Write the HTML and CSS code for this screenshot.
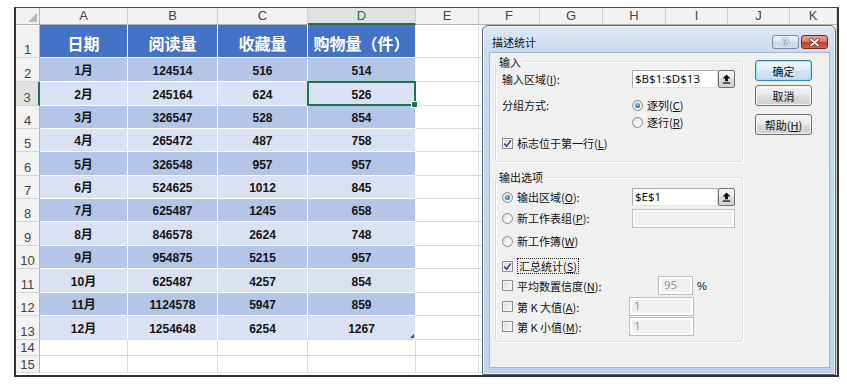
FILE: index.html
```html
<!DOCTYPE html>
<html lang="zh-CN">
<head>
<meta charset="utf-8">
<title>描述统计</title>
<link rel="stylesheet" href="styles.css">
</head>
<body>
<div class="frame">
  <div class="sheet">
    <div class="row colhead">
      <span class="corner"><svg width="9" height="9" viewBox="0 0 9 9"><path d="M9 0V9H0Z" fill="#b9b9b9"/></svg></span>
      <span>A</span><span>B</span><span>C</span><span class="cur">D</span><span>E</span><span>F</span><span>G</span><span>H</span><span>I</span><span>J</span><span>K</span>
    </div>
    <div class="row thead">
      <span>1</span><span>日期</span><span>阅读量</span><span>收藏量</span><span>购物量（件）</span><span></span><span></span><span></span><span></span><span></span><span></span><span></span>
    </div>
    <div class="row dark">
      <span>2</span><span>1月</span><span>124514</span><span>516</span><span>514</span><span></span><span></span><span></span><span></span><span></span><span></span><span></span>
    </div>
    <div class="row light">
      <span class="cur">3</span><span>2月</span><span>245164</span><span>624</span><span class="active">526</span><span></span><span></span><span></span><span></span><span></span><span></span><span></span>
    </div>
    <div class="row dark">
      <span>4</span><span>3月</span><span>326547</span><span>528</span><span>854</span><span></span><span></span><span></span><span></span><span></span><span></span><span></span>
    </div>
    <div class="row light">
      <span>5</span><span>4月</span><span>265472</span><span>487</span><span>758</span><span></span><span></span><span></span><span></span><span></span><span></span><span></span>
    </div>
    <div class="row dark">
      <span>6</span><span>5月</span><span>326548</span><span>957</span><span>957</span><span></span><span></span><span></span><span></span><span></span><span></span><span></span>
    </div>
    <div class="row light">
      <span>7</span><span>6月</span><span>524625</span><span>1012</span><span>845</span><span></span><span></span><span></span><span></span><span></span><span></span><span></span>
    </div>
    <div class="row dark">
      <span>8</span><span>7月</span><span>625487</span><span>1245</span><span>658</span><span></span><span></span><span></span><span></span><span></span><span></span><span></span>
    </div>
    <div class="row light">
      <span>9</span><span>8月</span><span>846578</span><span>2624</span><span>748</span><span></span><span></span><span></span><span></span><span></span><span></span><span></span>
    </div>
    <div class="row dark">
      <span>10</span><span>9月</span><span>954875</span><span>5215</span><span>957</span><span></span><span></span><span></span><span></span><span></span><span></span><span></span>
    </div>
    <div class="row light">
      <span>11</span><span>10月</span><span>625487</span><span>4257</span><span>854</span><span></span><span></span><span></span><span></span><span></span><span></span><span></span>
    </div>
    <div class="row dark">
      <span>12</span><span>11月</span><span>1124578</span><span>5947</span><span>859</span><span></span><span></span><span></span><span></span><span></span><span></span><span></span>
    </div>
    <div class="row light last">
      <span>13</span><span>12月</span><span>1254648</span><span>6254</span><span class="tend">1267</span><span></span><span></span><span></span><span></span><span></span><span></span><span></span>
    </div>
    <div class="row">
      <span>14</span><span></span><span></span><span></span><span></span><span></span><span></span><span></span><span></span><span></span><span></span><span></span>
    </div>
    <div class="row">
      <span>15</span><span></span><span></span><span></span><span></span><span></span><span></span><span></span><span></span><span></span><span></span><span></span>
    </div>
  </div>

  <div class="dialog">
    <div class="titlebar">
      <span class="title">描述统计</span>
      <span class="caps">
        <span class="cap cap-help">?</span>
        <span class="cap cap-close"><svg width="11" height="9" viewBox="0 0 11 9"><path d="M2 1.5L9 7.5M9 1.5L2 7.5" stroke="#6e2418" stroke-width="3.4" stroke-linecap="round"/><path d="M2 1.5L9 7.5M9 1.5L2 7.5" stroke="#fff" stroke-width="2" stroke-linecap="round"/></svg></span>
      </span>
    </div>
    <div class="client">
      <div class="groups">
        <div class="group g-in">
          <span class="legend">输入</span>
          <div class="line l1">
            <span class="lbl w130">输入区域(<u>I</u>):</span>
            <span class="field">$B$1:$D$13</span>
            <span class="pick"><svg width="9" height="10" viewBox="0 0 9 10"><path d="M4.5 0.5L8.5 4.6H6V7.2H3V4.6H0.5Z" fill="#111"/><rect x="0.8" y="8.4" width="7.4" height="1.3" fill="#111"/></svg></span>
          </div>
          <div class="line l2">
            <span class="lbl w130">分组方式:</span>
            <span class="radio on"></span><span>逐列(<u>C</u>)</span>
          </div>
          <div class="line l3">
            <span class="radio"></span><span>逐行(<u>R</u>)</span>
          </div>
          <div class="line l4">
            <span class="check"><svg width="9" height="9" viewBox="0 0 9 9"><path d="M1.3 4.6L3.6 7.2L7.8 1.4" fill="none" stroke="#2d4684" stroke-width="1.6"/></svg></span><span>标志位于第一行(<u>L</u>)</span>
          </div>
        </div>

        <div class="group g-out">
          <span class="legend">输出选项</span>
          <div class="line o1">
            <span class="lbl w130"><span class="radio on"></span>输出区域(<u>O</u>):</span>
            <span class="field">$E$1</span>
            <span class="pick"><svg width="9" height="10" viewBox="0 0 9 10"><path d="M4.5 0.5L8.5 4.6H6V7.2H3V4.6H0.5Z" fill="#111"/><rect x="0.8" y="8.4" width="7.4" height="1.3" fill="#111"/></svg></span>
          </div>
          <div class="line o2">
            <span class="lbl w130"><span class="radio"></span>新工作表组(<u>P</u>):</span>
            <span class="field off wide"></span>
          </div>
          <div class="line o3">
            <span class="radio"></span><span>新工作簿(<u>W</u>)</span>
          </div>
          <div class="line o4">
            <span class="check"><svg width="9" height="9" viewBox="0 0 9 9"><path d="M1.3 4.6L3.6 7.2L7.8 1.4" fill="none" stroke="#2d4684" stroke-width="1.6"/></svg></span><span class="focus">汇总统计(<u>S</u>)</span>
          </div>
          <div class="line o5">
            <span class="lbl w156"><span class="check"></span>平均数置信度(<u>N</u>):</span>
            <span class="field off small">95</span>
            <span class="pct">%</span>
          </div>
          <div class="line o6">
            <span class="lbl w127"><span class="check"></span>第 K 大值(<u>A</u>):</span>
            <span class="field off mid">1</span>
          </div>
          <div class="line o7">
            <span class="lbl w127"><span class="check"></span>第 K 小值(<u>M</u>):</span>
            <span class="field off mid">1</span>
          </div>
        </div>
      </div>

      <div class="buttons">
        <span class="btn default">确定</span>
        <span class="btn">取消</span>
        <span class="btn help">帮助(<u>H</u>)</span>
      </div>
    </div>
  </div>
</div>
</body>
</html>
```

FILE: styles.css
```css
* { box-sizing: border-box; }

html, body {
  margin: 0;
  padding: 0;
  background: #fff;
}

body {
  width: 847px;
  height: 388px;
  overflow: hidden;
  font-family: "Liberation Sans", "Noto Sans CJK SC", sans-serif;
}

/* ---------- worksheet ---------- */
.frame {
  position: relative;
  margin: 7px 0 0 14px;
  width: 825px;
  border-top: 1px solid #4a4a4a;
  border-left: 2px solid #333;
  border-right: 2px solid #333;
  border-bottom: 2px solid #333;
}

.sheet {
  display: grid;
  grid-template-columns: 24px 88px 90px 90px 108px 63px 61px 63px 63px 62px 62px 47px;
  grid-template-rows: 17px 33px 24px 24px 23px 23px 24px 23px 23px 24px 23px 24px 23px 24px 16px 17px;
  height: 367px;
  overflow: hidden;
}

.row { display: contents; }

.row > span {
  display: flex;
  align-items: flex-end;
  justify-content: center;
  border-right: 1px solid #dadada;
  border-bottom: 1px solid #dadada;
  padding-bottom: 3px;
  font-size: 12px;
  line-height: 14px;
  font-weight: bold;
  color: #141414;
  white-space: nowrap;
}

/* row numbers */
.row > span:first-child {
  background: #f2f2f2;
  border-right-color: #b3b3b3;
  border-bottom-color: #d4d4d4;
  padding-bottom: 0;
  font-size: 13px;
  line-height: 15px;
  font-weight: normal;
  color: #454545;
}

.row > span:first-child.cur {
  background: #e1e1e1;
  color: #217346;
  border-right: 2px solid #217346;
}

/* column letters */
.colhead > span {
  background: #f2f2f2;
  border-right-color: #d0d0d0;
  border-bottom-color: #b3b3b3;
  align-items: center;
  padding: 0;
  font-size: 13px;
  font-weight: normal;
  color: #454545;
}

.colhead > span.cur {
  background: #e1e1e1;
  color: #217346;
  border-bottom: 2px solid #217346;
}

.row > span.corner {
  justify-content: flex-end;
  align-items: flex-end;
  padding: 0 2px 2px 0;
  border-right-color: #b3b3b3;
  border-bottom-color: #b3b3b3;
}

/* table body */
.thead > span:nth-child(n+2):nth-child(-n+5) {
  background: #4472c4;
  color: #fff;
  border-color: #fff;
  align-items: center;
  padding: 3px 0 0;
  font-family: "Noto Sans CJK SC", sans-serif;
  font-size: 16px;
  line-height: 20px;
}

.dark > span:nth-child(n+2):nth-child(-n+5) {
  background: #b4c6e7;
  border-color: #fff;
}

.light > span:nth-child(n+2):nth-child(-n+5) {
  background: #d9e1f2;
  border-color: #fff;
}

.last > span:nth-child(n+2):nth-child(-n+5) {
  border-bottom-color: #dadada;
}

/* active cell */
.row > span.active { position: relative; }

.row > span.active::after {
  content: "";
  position: absolute;
  left: -1px;
  top: -1px;
  right: -1px;
  bottom: -1px;
  border: 2px solid #217346;
}

.row > span.active::before {
  content: "";
  position: absolute;
  right: -3px;
  bottom: -3px;
  width: 5px;
  height: 5px;
  background: #217346;
  border: 1px solid #fff;
  z-index: 1;
}

.row > span.tend { position: relative; }

.row > span.tend::after {
  content: "";
  position: absolute;
  right: 1px;
  bottom: 1px;
  width: 4px;
  height: 4px;
  background: #2e4f9c;
  clip-path: polygon(100% 0, 100% 100%, 0 100%);
}

/* ---------- dialog ---------- */
.dialog {
  position: absolute;
  left: 466px;
  top: 17px;
  width: 354px;
  height: 350px;
  border: 1px solid #58677a;
  border-radius: 6px 6px 0 0;
  background: linear-gradient(#dfe9f5, #cadbef 26px, #c0d3ea);
  box-shadow: inset 0 0 0 1px rgba(255, 255, 255, 0.6);
  padding: 0 5px 6px 6px;
  display: flex;
  flex-direction: column;
  font-family: "Noto Sans CJK SC", "Liberation Sans", sans-serif;
  font-size: 11px;
  color: #111;
}

.titlebar {
  height: 26px;
  flex: none;
  display: flex;
  justify-content: space-between;
  align-items: flex-start;
  padding: 8px 2px 0 3px;
}

.title { line-height: 16px; }

.caps {
  display: flex;
  gap: 2px;
  margin-top: 1px;
}

.cap {
  width: 27px;
  height: 14px;
  border-radius: 3px;
  display: flex;
  align-items: center;
  justify-content: center;
}

.cap-help {
  border: 1px solid #7b8ca3;
  background: linear-gradient(#eef3f9, #d9e4f1 50%, #c7d6e9 51%, #d2dfee);
  color: #fff;
  font-family: "Liberation Sans", sans-serif;
  font-weight: bold;
  font-size: 11px;
  line-height: 12px;
  text-shadow: 0 0 1px #2d3e55, 0 0 1px #2d3e55;
}

.cap-close {
  border: 1px solid #6b2a22;
  background: linear-gradient(#e7a597, #d77b68 45%, #c23d27 52%, #d26a52);
}

.client {
  flex: 1;
  background: #f0f0f0;
  border: 1px solid #a6b8cf;
  display: flex;
  gap: 12px;
  padding-left: 5px;
}

.groups {
  margin-top: 8px;
  width: 248px;
}

.group {
  border: 1px solid #d5dfe5;
  border-radius: 3px;
  box-shadow: inset 1px 1px 0 #fff, 1px 1px 0 #fff;
  padding: 0 0 9px 6px;
  display: flex;
  flex-direction: column;
}

.g-out {
  margin-top: 15px;
  padding-bottom: 5px;
}

.legend {
  align-self: flex-start;
  margin: -8px 0 0 -5px;
  padding: 0 2px;
  background: #f0f0f0;
  line-height: 16px;
}

.g-out .legend { margin-top: -9px; }

.line {
  display: flex;
  align-items: center;
  height: 18px;
  white-space: nowrap;
}

.l2 { margin-top: 8px; }
.l3 { height: 16px; padding-left: 130px; }
.l4 { margin-top: 4px; }

.o1 { margin-top: 3px; }
.o2 { margin-top: 3px; }
.o3 { margin-top: 5px; }
.o4 { margin-top: 7px; }
.o5 { margin-top: 1px; height: 19px; }
.o6 { margin-top: 2px; height: 19px; }
.o7 { margin-top: 1px; height: 19px; }

.lbl {
  flex: none;
  display: flex;
  align-items: center;
}

.w130 { width: 130px; }
.w156 { width: 156px; }
.w127 { width: 127px; }

u { text-underline-offset: 1px; }

.field {
  width: 86px;
  height: 18px;
  flex: none;
  background: #fff;
  border: 1px solid #abadb3;
  border-right-color: #d5d9e0;
  border-bottom-color: #dfe4ea;
  padding-left: 2px;
  font-family: "Noto Sans", "Liberation Sans", sans-serif;
  font-size: 11.5px;
  line-height: 16px;
  color: #111;
}

.field.off {
  background: #f0f0f0;
  border: 1px solid #bdbdbd;
  box-shadow: inset 0 0 0 2px #fff;
  color: #9a9a9a;
  padding-left: 4px;
}

.field.wide { width: 103px; height: 19px; }
.field.small { width: 35px; height: 19px; padding-left: 5px; }
.field.mid { width: 65px; height: 19px; }

.pct {
  margin-left: 4px;
  font-family: "Liberation Sans", sans-serif;
  font-size: 11px;
}

.pick {
  width: 17px;
  height: 18px;
  flex: none;
  border: 1px solid #707070;
  border-radius: 2px;
  background: linear-gradient(#f6f6f6, #e9e9e9 50%, #dcdcdc 51%, #d2d2d2);
  display: flex;
  align-items: center;
  justify-content: center;
}

.radio {
  width: 11px;
  height: 11px;
  flex: none;
  margin-right: 4px;
  border: 1px solid #8e8f8f;
  border-radius: 50%;
  background: radial-gradient(circle at 60% 65%, #ffffff, #e6e6e6 60%, #d3d3d3);
  display: flex;
  align-items: center;
  justify-content: center;
}

.radio.on::before {
  content: "";
  width: 5px;
  height: 5px;
  border-radius: 50%;
  background: radial-gradient(circle at 40% 35%, #8cc8f2, #1f6fb8 70%, #0d4f95);
}

.check {
  width: 11px;
  height: 11px;
  flex: none;
  margin-right: 4px;
  border: 1px solid #8e8f8f;
  background: linear-gradient(135deg, #dcdcdc, #f8f8f8);
  box-shadow: inset 0 0 0 1px #f4f4f4;
  display: flex;
  align-items: center;
  justify-content: center;
}

.focus {
  border: 1px dotted #222;
  padding: 0 1px;
  line-height: 14px;
}

.buttons {
  margin-top: 7px;
  display: flex;
  flex-direction: column;
}

.btn {
  width: 57px;
  height: 21px;
  border: 1px solid #707070;
  border-radius: 3px;
  background: linear-gradient(#f3f3f3, #ebebeb 48%, #dddddd 52%, #cfcfcf);
  box-shadow: inset 0 0 0 1px rgba(255, 255, 255, 0.75);
  display: flex;
  align-items: center;
  justify-content: center;
  line-height: 14px;
}

.btn + .btn { margin-top: 4px; }
.btn.help { margin-top: 8px; }

.btn.default {
  border-color: #3c7fb1;
  box-shadow: inset 0 0 0 1px #a7dcf7;
  background: linear-gradient(#eef6fb, #e1eef8 48%, #cfe4f3 52%, #c3dbee);
}
```
